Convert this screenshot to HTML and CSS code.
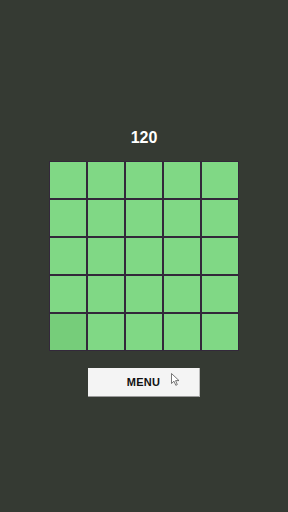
FILE: index.html
```html
<!DOCTYPE html>
<html lang="en">
<head>
  <meta charset="UTF-8">
  <meta name="viewport" content="width=device-width, initial-scale=1.0">
  <title>Grid Game</title>
  <link rel="stylesheet" href="styles.css">
</head>
<body>
  <div class="game">
    <div class="score">120</div>

    <div class="board">
      <div class="cell"></div><div class="cell"></div><div class="cell"></div><div class="cell"></div><div class="cell"></div>
      <div class="cell"></div><div class="cell"></div><div class="cell"></div><div class="cell"></div><div class="cell"></div>
      <div class="cell"></div><div class="cell"></div><div class="cell"></div><div class="cell"></div><div class="cell"></div>
      <div class="cell"></div><div class="cell"></div><div class="cell"></div><div class="cell"></div><div class="cell"></div>
      <div class="cell cell-hover"></div><div class="cell"></div><div class="cell"></div><div class="cell"></div><div class="cell"></div>
    </div>

    <button class="menu-button">
      MENU
      <svg class="cursor" width="9" height="13" viewBox="0 0 9 13">
        <path d="M0.5 0.5 L0.5 10.5 L3 8.2 L4.8 12.3 L6.3 11.6 L4.6 7.6 L8 7.6 Z" fill="#fff" stroke="#555" stroke-width="0.8" stroke-linejoin="round"/>
      </svg>
    </button>
  </div>
</body>
</html>
```

FILE: styles.css
```css
html, body {
  margin: 0;
  padding: 0;
  height: 100%;
}
body {
  background-color: #353a33;
  font-family: 'Liberation Sans', Arial, sans-serif;
}
.game {
  display: flex;
  flex-direction: column;
  align-items: center;
}
.score {
  margin-top: 129px;
  color: #fff;
  font-size: 16px;
  font-weight: bold;
  line-height: 18px;
  height: 18px;
}
.board {
  margin-top: 14px;
  display: grid;
  grid-template-columns: repeat(5, 36px);
  grid-template-rows: repeat(5, 36px);
  gap: 2px;
  padding: 1px;
  background-color: #33283a;
}
.cell {
  background-color: #80d885;
}
.cell-hover {
  background-color: #76cd7a;
}
.menu-button {
  position: relative;
  margin-top: 17px;
  width: 112px;
  height: 29px;
  padding: 0;
  background-color: #f4f4f4;
  border: none;
  border-bottom: 1px solid #9a9a9a;
  border-right: 1px solid #bbb;
  color: #111;
  font-family: 'Liberation Sans', Arial, sans-serif;
  font-size: 11px;
  font-weight: bold;
  letter-spacing: 0.3px;
  cursor: pointer;
}
.cursor {
  position: absolute;
  left: 83px;
  top: 5px;
}
```
